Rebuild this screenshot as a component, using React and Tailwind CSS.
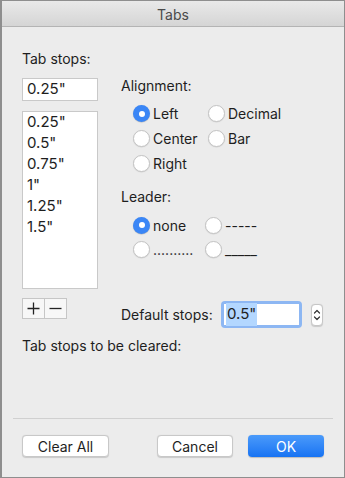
import React from 'react';

const Radio = ({ checked, label }) => (
  <div className="flex h-full items-center gap-[3px]">
    {checked ? (
      <span className="flex h-[17px] w-[17px] items-center justify-center rounded-full bg-[#3a86f6] shadow-[0_0.5px_1px_rgba(0,0,0,0.25)]">
        <span className="h-[6px] w-[6px] rounded-full bg-white" />
      </span>
    ) : (
      <span className="h-[17px] w-[17px] rounded-full border border-[#c4c4c4] bg-white shadow-[0_0.5px_1px_rgba(0,0,0,0.12)]" />
    )}
    <span>{label}</span>
  </div>
);

const stops = ['0.25"', '0.5"', '0.75"', '1"', '1.25"', '1.5"'];

const App = () => {
  return (
    <div
      className="flex h-[478px] w-[345px] flex-col border-y border-l-2 border-r border-[#8e8e8e] bg-[#ececec] text-[14px] text-[#1e1e1e]"
      style={{ fontFamily: 'Inter, "Liberation Sans", sans-serif' }}
    >
      <div className="flex h-[26px] shrink-0 items-center justify-center border-b border-[#b4b4b4] bg-gradient-to-b from-[#e9e9e9] to-[#d5d5d5] pt-[2px] text-[14px] text-[#4a4a4a]">
        Tabs
      </div>

      <div className="flex pl-[20px] pt-[24px]">
        <div className="flex w-[76px] flex-col">
          <div className="h-[16px] leading-[16px]">Tab stops:</div>
          <div className="mt-[11px] flex h-[23px] items-center border border-[#c9c9c9] bg-white pl-[4px] text-[15px]">
            0.25"
          </div>
          <div className="mt-[10px] h-[178px] border border-[#c9c9c9] bg-white pl-[4px] text-[15px]">
            {stops.map((s) => (
              <div key={s} className="flex h-[21px] items-center">
                {s}
              </div>
            ))}
          </div>
          <div className="mt-[9px] flex">
            <div className="flex h-[21px] w-[23px] items-center justify-center border border-[#c6c6c6] bg-[#f7f7f7]">
              <svg width="13" height="13" viewBox="0 0 13 13" stroke="#222" strokeWidth="1.3">
                <path d="M6.5 0.5 V12.5 M0.5 6.5 H12.5" />
              </svg>
            </div>
            <div className="flex h-[21px] w-[22px] items-center justify-center border border-l-0 border-[#c6c6c6] bg-[#f7f7f7]">
              <svg width="13" height="13" viewBox="0 0 13 13" stroke="#222" strokeWidth="1.3">
                <path d="M0.5 6.5 H12.5" />
              </svg>
            </div>
          </div>
        </div>

        <div className="ml-[23px] flex flex-col pt-[27px]">
          <div className="h-[16px] leading-[16px]">Alignment:</div>
          <div className="mt-[7px] grid grid-cols-[75px_auto] pl-[12px]">
            <div className="h-[25px]"><Radio checked label="Left" /></div>
            <div className="h-[25px]"><Radio label="Decimal" /></div>
            <div className="h-[25px]"><Radio label="Center" /></div>
            <div className="h-[25px]"><Radio label="Bar" /></div>
            <div className="h-[25px]"><Radio label="Right" /></div>
          </div>

          <div className="mt-[13px] h-[16px] leading-[16px]">Leader:</div>
          <div className="mt-[8px] grid grid-cols-[72px_auto] pl-[12px]">
            <div className="h-[24px]"><Radio checked label="none" /></div>
            <div className="h-[24px]"><Radio label="-----" /></div>
            <div className="h-[24px]"><Radio label=".........." /></div>
            <div className="h-[24px]"><Radio label="_____" /></div>
          </div>

          <div className="mt-[40px] flex items-center">
            <span className="w-[100px]">Default stops:</span>
            <div className="h-[27px] w-[81px] rounded-[4px] bg-[#8db7f3] p-[3px]">
              <div className="flex h-full items-center bg-white pl-[2px] text-[15px]">
                <span className="bg-[#b3d7ff] px-[1px]">0.5"</span>
              </div>
            </div>
            <div className="ml-[9px] flex h-[22px] w-[12px] flex-col items-center justify-center rounded-[4px] border border-[#c6c6c6] bg-white shadow-[0_0.5px_1px_rgba(0,0,0,0.15)]">
              <svg width="8" height="16" viewBox="0 0 8 16" fill="none" stroke="#333" strokeWidth="1.2" strokeLinecap="round" strokeLinejoin="round">
                <path d="M1.5 6 L4 3.5 L6.5 6" />
                <path d="M1.5 10 L4 12.5 L6.5 10" />
              </svg>
            </div>
          </div>
        </div>
      </div>

      <div className="mt-[10px] h-[16px] pl-[20px] leading-[16px]">Tab stops to be cleared:</div>

      <div className="mx-[11px] mt-[64px] border-t border-[#d0d0d0]" />

      <div className="mt-[16px] flex pl-[20px]">
        <button className="h-[22px] w-[87px] rounded-[4px] border border-[#c8c8c8] bg-white text-[14px] shadow-[0_0.5px_1px_rgba(0,0,0,0.15)]">
          Clear All
        </button>
        <button className="ml-[48px] h-[22px] w-[76px] rounded-[4px] border border-[#c8c8c8] bg-white text-[14px] shadow-[0_0.5px_1px_rgba(0,0,0,0.15)]">
          Cancel
        </button>
        <button className="ml-[15px] h-[22px] w-[76px] rounded-[4px] bg-gradient-to-b from-[#4a9afa] to-[#1673f3] text-[14px] text-white shadow-[0_0.5px_1px_rgba(0,0,0,0.2)]">
          OK
        </button>
      </div>
    </div>
  );
};

export default App;
